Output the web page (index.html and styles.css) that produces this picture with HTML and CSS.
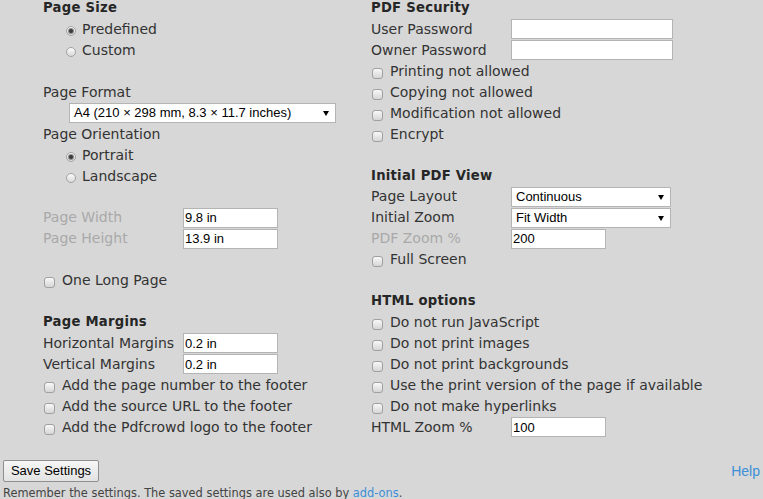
FILE: index.html
```html
<!DOCTYPE html>
<html>
<head>
<meta charset="utf-8">
<link rel="stylesheet" href="styles.css">
</head>
<body>
<div class="page">
  <div class="cols">
    <div class="col col-left">
      <div class="row head">Page Size</div>
      <label class="row opt"><input type="radio" name="size" checked><span>Predefined</span></label>
      <label class="row opt"><input type="radio" name="size"><span>Custom</span></label>
      <div class="row"></div>
      <div class="row">Page Format</div>
      <div class="row sel-row"><span class="select wide">A4 (210 × 298 mm, 8.3 × 11.7 inches)</span></div>
      <div class="row">Page Orientation</div>
      <label class="row opt"><input type="radio" name="orient" checked><span>Portrait</span></label>
      <label class="row opt"><input type="radio" name="orient"><span>Landscape</span></label>
      <div class="row"></div>
      <div class="row field"><span class="lbl disabled">Page Width</span><input class="txt small" value="9.8 in"></div>
      <div class="row field"><span class="lbl disabled">Page Height</span><input class="txt small" value="13.9 in"></div>
      <div class="row"></div>
      <label class="row chk"><input type="checkbox"><span>One Long Page</span></label>
      <div class="row"></div>
      <div class="row head">Page Margins</div>
      <div class="row field"><span class="lbl">Horizontal Margins</span><input class="txt small" value="0.2 in"></div>
      <div class="row field"><span class="lbl">Vertical Margins</span><input class="txt small" value="0.2 in"></div>
      <label class="row chk"><input type="checkbox"><span>Add the page number to the footer</span></label>
      <label class="row chk"><input type="checkbox"><span>Add the source URL to the footer</span></label>
      <label class="row chk"><input type="checkbox"><span>Add the Pdfcrowd logo to the footer</span></label>
    </div>
    <div class="col col-right">
      <div class="row head">PDF Security</div>
      <div class="row field"><span class="lbl">User Password</span><input class="txt long" type="password"></div>
      <div class="row field"><span class="lbl">Owner Password</span><input class="txt long" type="password"></div>
      <label class="row chk"><input type="checkbox"><span>Printing not allowed</span></label>
      <label class="row chk"><input type="checkbox"><span>Copying not allowed</span></label>
      <label class="row chk"><input type="checkbox"><span>Modification not allowed</span></label>
      <label class="row chk"><input type="checkbox"><span>Encrypt</span></label>
      <div class="row"></div>
      <div class="row head">Initial PDF View</div>
      <div class="row field"><span class="lbl">Page Layout</span><span class="select mid">Continuous</span></div>
      <div class="row field"><span class="lbl">Initial Zoom</span><span class="select mid">Fit Width</span></div>
      <div class="row field"><span class="lbl disabled">PDF Zoom %</span><input class="txt zoom" value="200"></div>
      <label class="row chk"><input type="checkbox"><span>Full Screen</span></label>
      <div class="row"></div>
      <div class="row head">HTML options</div>
      <label class="row chk"><input type="checkbox"><span>Do not run JavaScript</span></label>
      <label class="row chk"><input type="checkbox"><span>Do not print images</span></label>
      <label class="row chk"><input type="checkbox"><span>Do not print backgrounds</span></label>
      <label class="row chk"><input type="checkbox"><span>Use the print version of the page if available</span></label>
      <label class="row chk"><input type="checkbox"><span>Do not make hyperlinks</span></label>
      <div class="row field"><span class="lbl">HTML Zoom %</span><input class="txt zoom" value="100"></div>
    </div>
  </div>
  <div class="footer">
    <div class="bar">
      <button class="btn">Save Settings</button>
      <a class="help" href="#">Help</a>
    </div>
    <p class="note">Remember the settings. The saved settings are used also by <a href="#">add-ons</a>.</p>
  </div>
</div>
</body>
</html>
```

FILE: styles.css
```css
html, body {
  margin: 0;
  padding: 0;
  background: #d7d7d7;
}

body {
  font-family: "DejaVu Sans", sans-serif;
  font-size: 14px;
  color: #333;
  overflow: hidden;
}

.page {
  width: 763px;
  height: 499px;
  display: flex;
  flex-direction: column;
}

.cols {
  display: grid;
  grid-template-columns: 328px 1fr;
  padding-left: 43px;
  margin-top: -2px;
}

.col {
  display: flex;
  flex-direction: column;
}

.row {
  height: 20.95px;
  line-height: 20.95px;
  display: flex;
  align-items: center;
  white-space: nowrap;
}

.head {
  font-weight: bold;
  font-size: 13.2px;
  letter-spacing: 0.25px;
  color: #262626;
}

.opt {
  padding-left: 23px;
  gap: 6px;
}

.chk {
  padding-left: 1px;
  gap: 7px;
}

.lbl {
  width: 140px;
  flex: none;
}

.disabled {
  color: #a9a9a9;
}

input[type="radio"] {
  appearance: none;
  -webkit-appearance: none;
  margin: 4px 0 0 0;
  width: 10px;
  height: 10px;
  border-radius: 50%;
  border: 1px solid #a3a3a3;
  background: linear-gradient(#fbfbfb, #d9d9d9);
  box-sizing: border-box;
  flex: none;
  display: grid;
  place-items: center;
}

input[type="radio"]:checked::after {
  content: "";
  width: 4px;
  height: 4px;
  border-radius: 50%;
  background: #3a3a3a;
  box-shadow: 0 0 0 1px #8a8a8a;
}

input[type="checkbox"] {
  appearance: none;
  -webkit-appearance: none;
  margin: 4px 0 0 0;
  width: 11px;
  height: 11px;
  border-radius: 3px;
  border: 1px solid #a0a0a0;
  background: linear-gradient(#f8f8f8, #d6d6d6);
  box-sizing: border-box;
  flex: none;
}

.txt {
  font-family: "Liberation Sans", Arial, sans-serif;
  font-size: 13px;
  color: #000;
  height: 20px;
  box-sizing: border-box;
  border: 1px solid #b4b4b4;
  background: #fff;
  padding: 0 1px;
  margin: 0;
  outline: none;
}

.small { width: 95px; }
.long { width: 162px; }
.zoom { width: 95px; }

.sel-row {
  padding-left: 26px;
}

.select {
  position: relative;
  font-family: "Liberation Sans", Arial, sans-serif;
  font-size: 13px;
  color: #000;
  height: 20px;
  line-height: 18px;
  box-sizing: border-box;
  border: 1px solid #b4b4b4;
  background: #fff;
  padding-left: 4px;
  display: block;
}

.select::after {
  content: "";
  position: absolute;
  right: 6px;
  top: 7px;
  border-left: 3px solid transparent;
  border-right: 3px solid transparent;
  border-top: 5px solid #000;
}

.wide { width: 267px; }
.mid { width: 160px; }

.footer {
  margin-top: 22px;
  padding: 0 3px;
}

.bar {
  display: flex;
  justify-content: space-between;
  align-items: center;
}

.btn {
  font-family: "Liberation Sans", Arial, sans-serif;
  font-size: 13px;
  color: #000;
  width: 96px;
  height: 22px;
  padding: 0;
  margin: 0;
  border: 1px solid #8f8f8f;
  border-radius: 2px;
  background: linear-gradient(#f7f7f7, #e2e2e2);
}

.help {
  font-family: "Liberation Sans", Arial, sans-serif;
  font-size: 14px;
  color: #3d8fd8;
  text-decoration: none;
}

.note {
  margin: 4px 0 0 0;
  font-size: 11.4px;
  line-height: 14px;
  color: #444;
}

.note a {
  color: #3d8fd8;
  text-decoration: none;
}
```
